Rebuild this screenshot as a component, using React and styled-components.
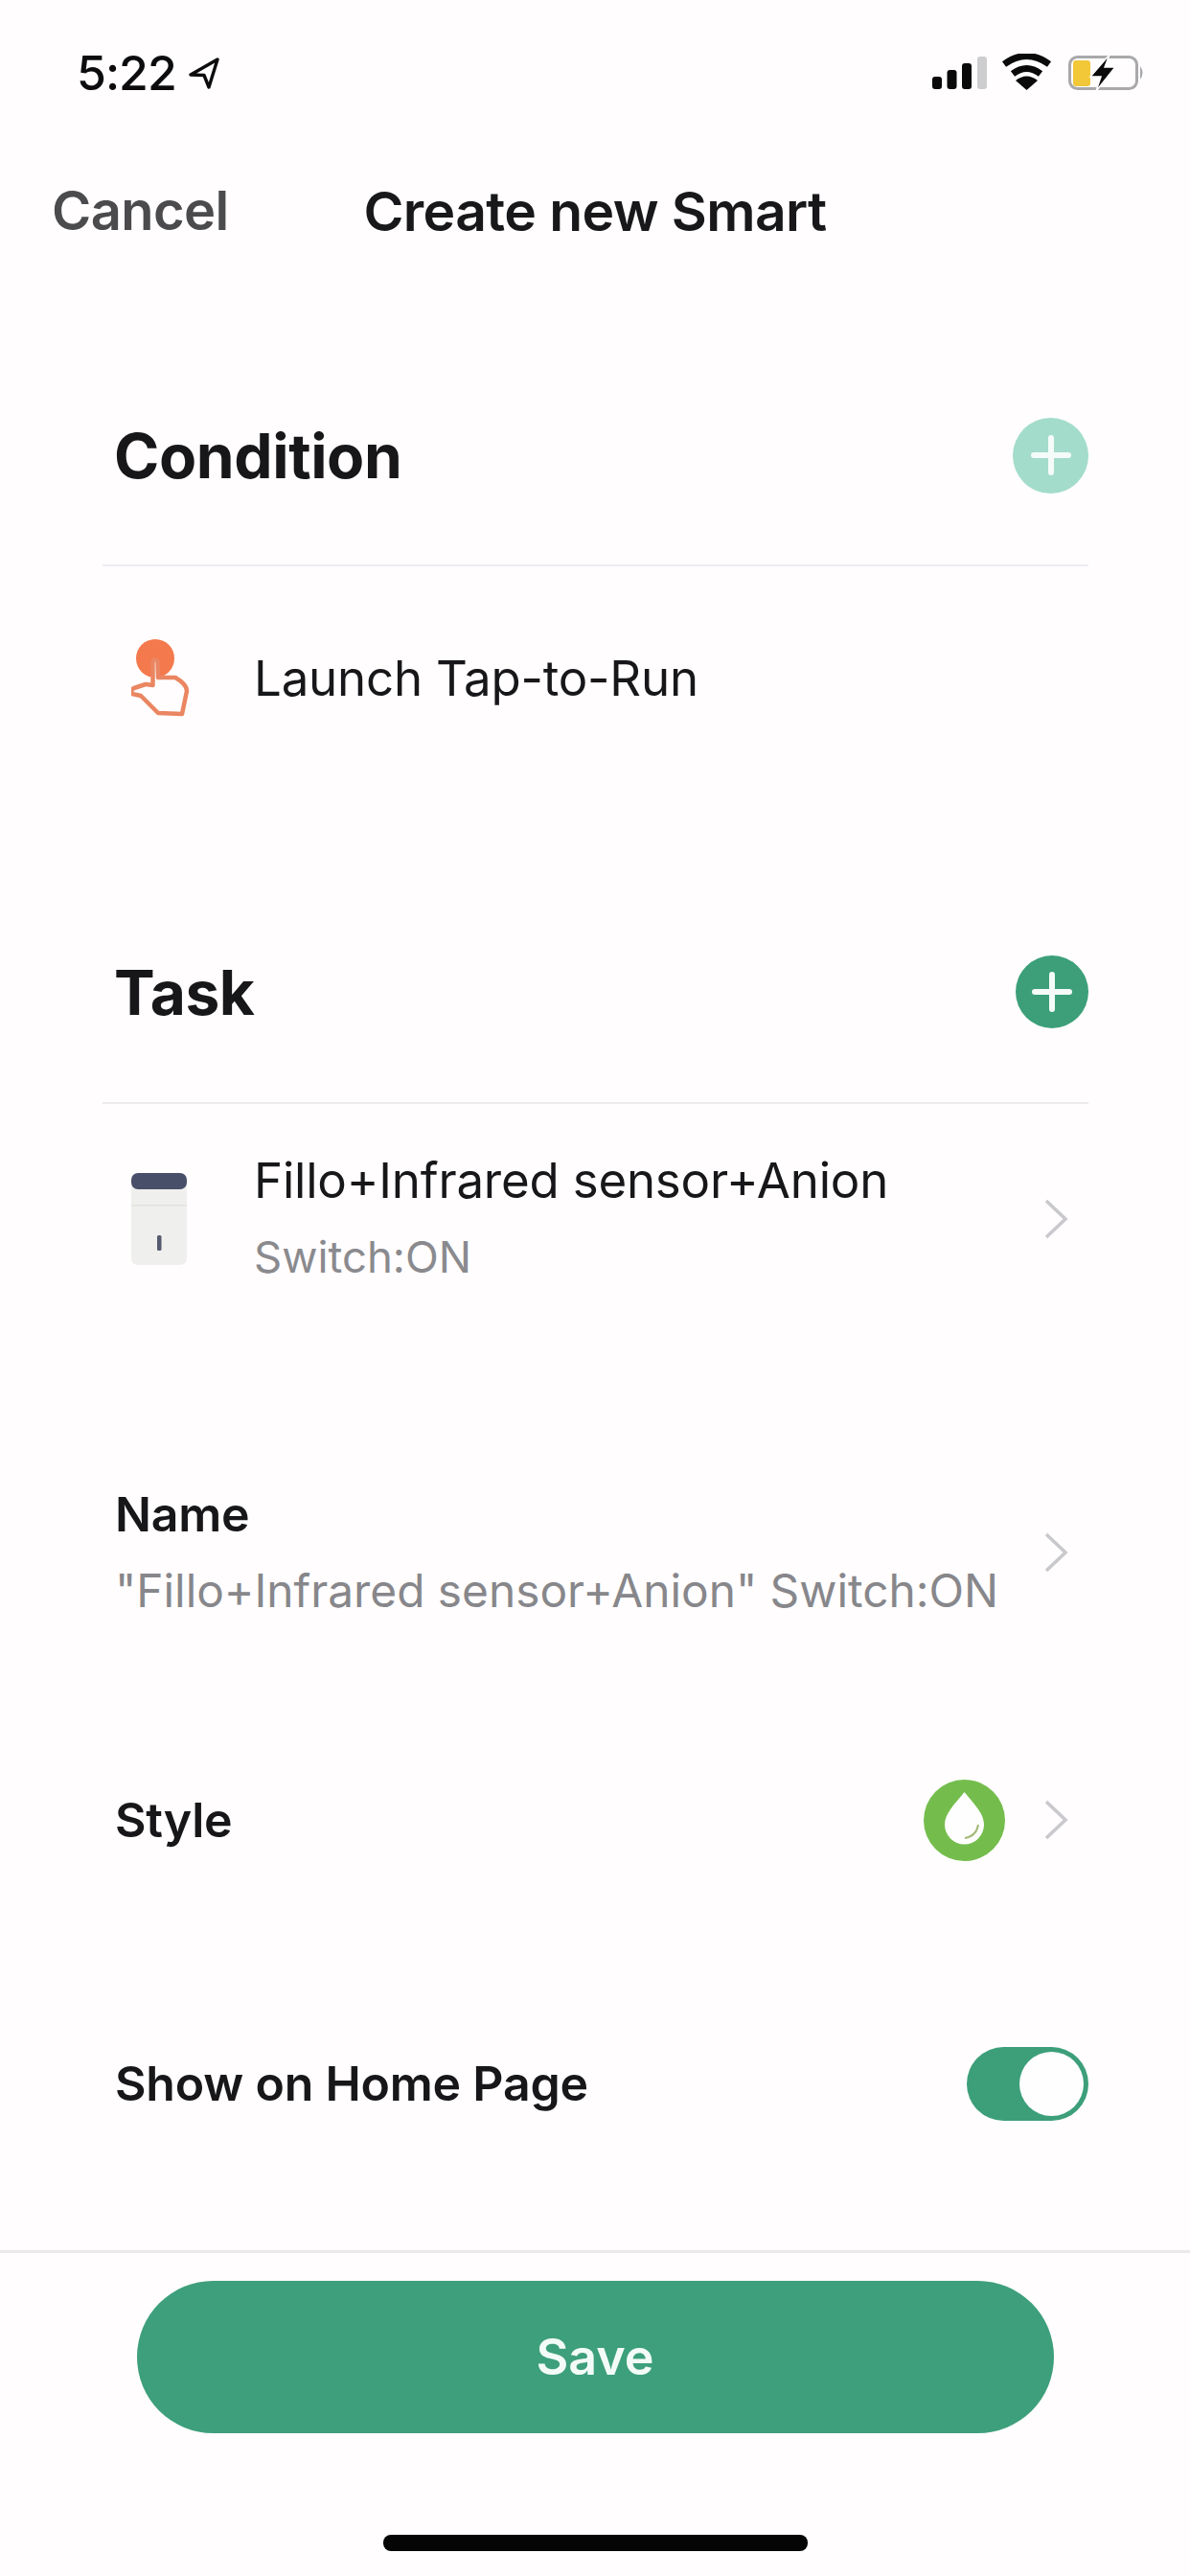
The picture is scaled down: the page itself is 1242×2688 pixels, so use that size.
import React from "react";
import styled, { createGlobalStyle } from "styled-components";

const GREEN = "#3c9f7a";

const Global = createGlobalStyle`
  html, body {
    margin: 0;
    padding: 0;
    background: #fffdfe;
  }
  * {
    box-sizing: border-box;
  }
`;

const Page = styled.div`
  width: 1242px;
  height: 2688px;
  display: flex;
  flex-direction: column;
  background: #fffdfe;
  color: #17171a;
  font-family: Inter, "Liberation Sans", sans-serif;
  overflow: hidden;
`;

const StatusBar = styled.div`
  height: 152px;
  flex: none;
  padding: 0 47px 0 80px;
  display: flex;
  align-items: center;
  justify-content: space-between;
`;

const Clock = styled.div`
  display: flex;
  align-items: center;
  gap: 12px;
  font-size: 50px;
  font-weight: 500;
  letter-spacing: -1px;
  color: #0c0c0e;
`;

const NavBar = styled.div`
  height: 136px;
  flex: none;
  padding: 0 54px;
  display: grid;
  grid-template-columns: 1fr auto 1fr;
  align-items: center;
`;

const Cancel = styled.div`
  font-size: 56px;
  font-weight: 600;
  color: #4b4b4e;
  letter-spacing: -0.6px;
`;

const Title = styled.div`
  font-size: 57px;
  font-weight: 600;
  color: #18181b;
  letter-spacing: -0.6px;
`;

const Section = styled.section`
  flex: none;
  margin: ${(p) => p.$top}px 106px 0 107px;
`;

const SectionHead = styled.div`
  height: ${(p) => p.$height}px;
  padding: 0 0 0 12px;
  display: flex;
  align-items: center;
  justify-content: space-between;
  border-bottom: 2px solid ${(p) => p.$line};
`;

const SectionTitle = styled.h2`
  margin: 0;
  font-size: 64px;
  font-weight: 700;
  letter-spacing: -0.4px;
  color: #17171a;
`;

const AddButton = styled.div`
  position: relative;
  width: ${(p) => p.$size}px;
  height: ${(p) => p.$size}px;
  border-radius: 50%;
  background: ${(p) => (p.$faded ? "#a3dccb" : GREEN)};

  &::before,
  &::after {
    content: "";
    position: absolute;
    left: 50%;
    top: 50%;
    background: #f4fbf8;
    border-radius: 3px;
    transform: translate(-50%, -50%);
  }
  &::before {
    width: 42px;
    height: 6px;
  }
  &::after {
    width: 6px;
    height: 42px;
  }
`;

const ItemRow = styled.div`
  height: ${(p) => p.$height}px;
  padding: 0 0 0 30px;
  display: flex;
  align-items: center;
`;

const ItemIcon = styled.div`
  width: 128px;
  flex: none;
  display: flex;
`;

const ItemBody = styled.div`
  flex: 1;
  display: flex;
  flex-direction: column;
  gap: 30px;
`;

const ItemTitle = styled.div`
  font-size: 51px;
  font-weight: 400;
  line-height: 50px;
  color: #17171a;
  letter-spacing: -0.2px;
`;

const ItemSub = styled.div`
  font-size: 45.5px;
  line-height: 50px;
  color: #8a8a8e;
`;

const Row = styled.div`
  flex: none;
  height: 200px;
  margin: ${(p) => p.$top}px 106px 0 120px;
  display: flex;
  align-items: center;
  justify-content: space-between;
`;

const RowLabel = styled.div`
  font-size: 50px;
  font-weight: 600;
  line-height: 56px;
  color: #17171a;
  letter-spacing: -0.2px;
`;

const RowValue = styled.div`
  margin-top: 24px;
  font-size: 47.8px;
  line-height: 56px;
  color: #87878b;
  white-space: nowrap;
`;

const RowEnd = styled.div`
  display: flex;
  align-items: center;
  gap: 40px;
  padding-right: ${(p) => p.$pad || 0}px;
`;

const Toggle = styled.div`
  width: 127px;
  height: 77px;
  padding: 5px;
  border-radius: 39px;
  background: ${GREEN};
  display: flex;
  justify-content: flex-end;
`;

const Knob = styled.div`
  width: 67px;
  height: 67px;
  border-radius: 50%;
  background: #fffefe;
`;

const Footer = styled.div`
  margin-top: auto;
  border-top: 3px solid #ebe9ec;
  padding: 29px 0 26px;
  display: flex;
  flex-direction: column;
  align-items: center;
`;

const SaveButton = styled.button`
  width: 957px;
  height: 159px;
  border: 0;
  border-radius: 80px;
  background: #3d9f7b;
  color: #f3fbf8;
  font-family: inherit;
  font-size: 52px;
  font-weight: 600;
`;

const HomeBar = styled.div`
  margin-top: 106px;
  width: 443px;
  height: 17px;
  border-radius: 8px;
  background: #050505;
`;

const StatusIcons = () => (
  <svg width="222" height="40" viewBox="973 56 222 40">
    <rect x="973" y="80" width="10" height="13" rx="3" fill="#0a0a0a" />
    <rect x="988.5" y="73" width="10" height="20" rx="3" fill="#0a0a0a" />
    <rect x="1004" y="66" width="10" height="27" rx="3" fill="#0a0a0a" />
    <rect x="1020" y="59" width="10" height="34" rx="3" fill="#cdcdcf" />
    <path d="M1071.5 94 L1060 84 Q1071.5 75 1083 84 Z" fill="#0a0a0a" />
    <path d="M1057 77 Q1071.5 66 1086 77" fill="none" stroke="#0a0a0a" strokeWidth="7" />
    <path d="M1048 67 Q1071.5 50 1095 67" fill="none" stroke="#0a0a0a" strokeWidth="7" />
    <rect x="1116.5" y="59.5" width="70" height="33" rx="8" fill="none" stroke="#a9a9ab" strokeWidth="3" />
    <rect x="1120" y="63" width="18" height="27" rx="3" fill="#f2c738" />
    <path d="M1190 69 Q1195 76 1190 83 Z" fill="#a9a9ab" />
    <path
      d="M1158 57 L1138 80 L1149 80 L1144 95 L1164 70 L1153 70 Z"
      fill="#0a0a0a"
      stroke="#fffdfe"
      strokeWidth="1.5"
    />
  </svg>
);

const LocationArrow = () => (
  <svg width="34" height="34" viewBox="0 0 34 34">
    <path
      d="M31 3 L3 19 L17 19.5 L22 32 Z"
      fill="none"
      stroke="#0c0c0e"
      strokeWidth="3.4"
      strokeLinejoin="round"
    />
  </svg>
);

const Chevron = () => (
  <svg width="26" height="42" viewBox="0 0 26 42">
    <path d="M3 2 L23 21 L3 40" fill="none" stroke="#c9c9cd" strokeWidth="3.6" />
  </svg>
);

const TapIcon = () => (
  <svg width="90" height="110" viewBox="37 14 90 110">
    <circle cx="62" cy="48" r="20" fill="#f4794c" />
    <path
      d="M59.5 51 Q62 47 64.5 51 L65 68 L83 68 Q95 75 95 82 L90 106 L65 105 L47 87 L38 85 Q36 81 40 79 L52 75 L59.5 76 Z"
      fill="#fffdfe"
      stroke="#ea8661"
      strokeWidth="4.5"
      strokeLinejoin="round"
    />
  </svg>
);

const DeviceIcon = () => (
  <svg width="58" height="97" viewBox="0 0 58 97">
    <path d="M0 14 H58 V88 Q58 96 50 96 H8 Q0 96 0 88 Z" fill="#efefed" />
    <rect x="0" y="0" width="58" height="17" rx="7" fill="#484f69" />
    <rect x="0" y="33" width="58" height="1.5" fill="#e2e2df" />
    <rect x="27" y="65" width="4.5" height="16" rx="1.5" fill="#565a6e" />
  </svg>
);

const DropIcon = () => (
  <svg width="85" height="85" viewBox="0 0 85 85">
    <circle cx="42.5" cy="42.5" r="42.5" fill="#74bd4c" />
    <path
      d="M42.5 13 C52 25 63 35 63 47 A20.5 20.5 0 0 1 22 47 C22 35 33 25 42.5 13 Z"
      fill="#fffefe"
    />
    <path d="M43 61 Q55 59 57 47" fill="none" stroke="#a4b878" strokeWidth="2" />
  </svg>
);

const App = () => (
  <Page>
    <Global />
    <StatusBar>
      <Clock>
        5:22
        <LocationArrow />
      </Clock>
      <StatusIcons />
    </StatusBar>

    <NavBar>
      <Cancel>Cancel</Cancel>
      <Title>Create new Smart</Title>
    </NavBar>

    <Section $top={73}>
      <SectionHead $height={230} $line="#efeaf2">
        <SectionTitle>Condition</SectionTitle>
        <AddButton $size={79} $faded />
      </SectionHead>
      <ItemRow $height={234}>
        <ItemIcon>
          <TapIcon />
        </ItemIcon>
        <ItemBody>
          <ItemTitle>Launch Tap-to-Run</ItemTitle>
        </ItemBody>
      </ItemRow>
    </Section>

    <Section $top={95}>
      <SectionHead $height={232} $line="#ececec">
        <SectionTitle>Task</SectionTitle>
        <AddButton $size={76} />
      </SectionHead>
      <ItemRow $height={240}>
        <ItemIcon>
          <DeviceIcon />
        </ItemIcon>
        <ItemBody>
          <ItemTitle>Fillo+Infrared sensor+Anion</ItemTitle>
          <ItemSub>Switch:ON</ItemSub>
        </ItemBody>
        <RowEnd $pad={21}>
          <Chevron />
        </RowEnd>
      </ItemRow>
    </Section>

    <Row $top={128}>
      <div>
        <RowLabel>Name</RowLabel>
        <RowValue>"Fillo+Infrared sensor+Anion" Switch:ON</RowValue>
      </div>
      <RowEnd $pad={21}>
        <Chevron />
      </RowEnd>
    </Row>

    <Row $top={79}>
      <RowLabel>Style</RowLabel>
      <RowEnd $pad={21}>
        <DropIcon />
        <Chevron />
      </RowEnd>
    </Row>

    <Row $top={75}>
      <RowLabel>Show on Home Page</RowLabel>
      <Toggle>
        <Knob />
      </Toggle>
    </Row>

    <Footer>
      <SaveButton>Save</SaveButton>
      <HomeBar />
    </Footer>
  </Page>
);

export default App;
